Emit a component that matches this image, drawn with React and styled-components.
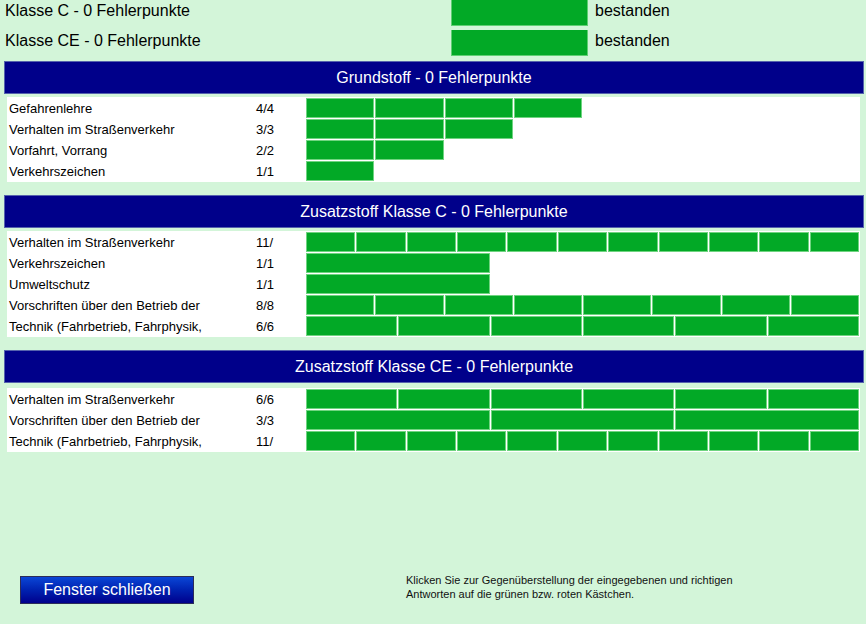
import React from "react";
import styled, { createGlobalStyle } from "styled-components";

const Global = createGlobalStyle`
  html, body { margin: 0; padding: 0; background: #d3f5d9; }
  body { font-family: "Liberation Sans", Arial, sans-serif; color: #000; }
`;

const Page = styled.div`
  width: 866px;
  height: 624px;
  display: flex;
  flex-direction: column;
  box-sizing: border-box;
  overflow: hidden;
`;

const StatusList = styled.div`
  display: flex;
  flex-direction: column;
  gap: 4px;
`;

const StatusRow = styled.div`
  display: grid;
  grid-template-columns: 451px 137px auto;
  height: 26px;
`;

const StatusLabel = styled.div`
  font-size: 16px;
  padding-left: 5px;
  line-height: 22px;
`;

const StatusBox = styled.div`
  background: #02a926;
  border: 1px solid #5fcf72;
  border-top: none;
  box-sizing: border-box;
`;

const StatusText = styled.div`
  font-size: 16px;
  padding-left: 7px;
  line-height: 22px;
`;

const Section = styled.section`
  margin-top: ${(p) => p.$top}px;
`;

const Header = styled.div`
  margin: 0 2px 0 4px;
  height: 33px;
  box-sizing: border-box;
  background: #00008a;
  border: 1px solid #5663ad;
  color: #fff;
  font-size: 16px;
  display: flex;
  align-items: center;
  justify-content: center;
`;

const Table = styled.div`
  margin: ${(p) => p.$gap}px 6px 0 7px;
  background: #fff;
  padding: 1px 0;
  display: flex;
  flex-direction: column;
  gap: 1px;
`;

const Row = styled.div`
  display: grid;
  grid-template-columns: 249px 50px 1fr;
  height: 20px;
  align-items: center;
`;

const Label = styled.div`
  font-size: 13px;
  padding-left: 2px;
  white-space: nowrap;
  overflow: hidden;
`;

const Score = styled.div`
  font-size: 13px;
  white-space: nowrap;
`;

const Bars = styled.div`
  display: flex;
  height: 20px;
  gap: 1px;
`;

const Cell = styled.div`
  flex: 0 0 calc(${(p) => 100 / p.$slots}% - 1px);
  height: 20px;
  background: #02a926;
  border: 1px solid #6fd480;
  box-sizing: border-box;
`;

const Footer = styled.div`
  margin-top: auto;
  display: flex;
  align-items: flex-start;
  padding: 0 0 20px 20px;
`;

const CloseButton = styled.button`
  width: 174px;
  height: 28px;
  margin-top: 3px;
  border: 1px solid #2c2c58;
  background: linear-gradient(to bottom, #0a46d6 0%, #0022b0 50%, #00008c 100%);
  color: #fff;
  font-family: "Liberation Sans", Arial, sans-serif;
  font-size: 16px;
  padding: 0;
  cursor: pointer;
`;

const Info = styled.div`
  margin-left: 212px;
  font-size: 11px;
  line-height: 14px;
  color: #111;
`;

const sections = [
  {
    title: "Grundstoff - 0 Fehlerpunkte",
    top: 5,
    gap: 3,
    rows: [
      { label: "Gefahrenlehre", score: "4/4", n: 4, slots: 8 },
      { label: "Verhalten im Straßenverkehr", score: "3/3", n: 3, slots: 8 },
      { label: "Vorfahrt, Vorrang", score: "2/2", n: 2, slots: 8 },
      { label: "Verkehrszeichen", score: "1/1", n: 1, slots: 8 },
    ],
  },
  {
    title: "Zusatzstoff Klasse C - 0 Fehlerpunkte",
    top: 13,
    gap: 3,
    rows: [
      { label: "Verhalten im Straßenverkehr", score: "11/", n: 11, slots: 11 },
      { label: "Verkehrszeichen", score: "1/1", n: 1, slots: 3 },
      { label: "Umweltschutz", score: "1/1", n: 1, slots: 3 },
      { label: "Vorschriften über den Betrieb der", score: "8/8", n: 8, slots: 8 },
      { label: "Technik (Fahrbetrieb, Fahrphysik,", score: "6/6", n: 6, slots: 6 },
    ],
  },
  {
    title: "Zusatzstoff Klasse CE - 0 Fehlerpunkte",
    top: 13,
    gap: 5,
    rows: [
      { label: "Verhalten im Straßenverkehr", score: "6/6", n: 6, slots: 6 },
      { label: "Vorschriften über den Betrieb der", score: "3/3", n: 3, slots: 3 },
      { label: "Technik (Fahrbetrieb, Fahrphysik,", score: "11/", n: 11, slots: 11 },
    ],
  },
];

export default function App() {
  return (
    <Page>
      <Global />
      <StatusList>
        <StatusRow>
          <StatusLabel>Klasse C - 0 Fehlerpunkte</StatusLabel>
          <StatusBox />
          <StatusText>bestanden</StatusText>
        </StatusRow>
        <StatusRow>
          <StatusLabel>Klasse CE - 0 Fehlerpunkte</StatusLabel>
          <StatusBox />
          <StatusText>bestanden</StatusText>
        </StatusRow>
      </StatusList>
      {sections.map((s) => (
        <Section key={s.title} $top={s.top}>
          <Header>{s.title}</Header>
          <Table $gap={s.gap}>
            {s.rows.map((r, i) => (
              <Row key={i}>
                <Label>{r.label}</Label>
                <Score>{r.score}</Score>
                <Bars>
                  {Array.from({ length: r.n }).map((_, j) => (
                    <Cell key={j} $slots={r.slots} />
                  ))}
                </Bars>
              </Row>
            ))}
          </Table>
        </Section>
      ))}
      <Footer>
        <CloseButton>Fenster schließen</CloseButton>
        <Info>
          Klicken Sie zur Gegenüberstellung der eingegebenen und richtigen
          <br />
          Antworten auf die grünen bzw. roten Kästchen.
        </Info>
      </Footer>
    </Page>
  );
}
